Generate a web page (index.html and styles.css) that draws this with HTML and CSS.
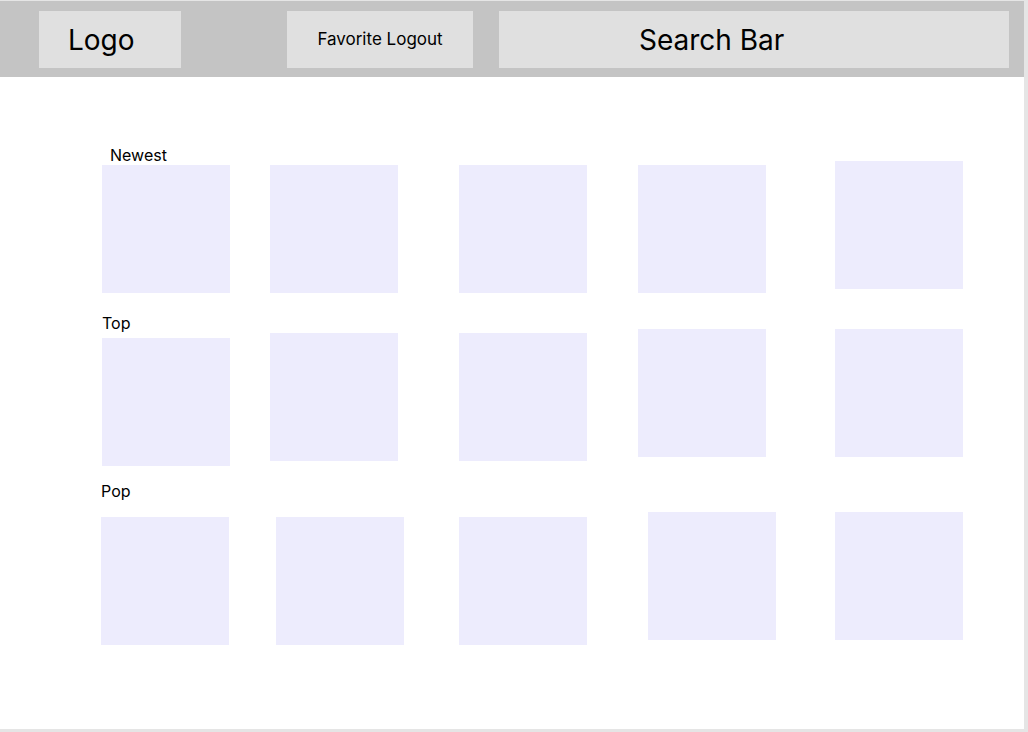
FILE: index.html
```html
<!DOCTYPE html>
<html lang="en">
<head>
  <meta charset="UTF-8">
  <meta name="viewport" content="width=device-width, initial-scale=1.0">
  <title>Home</title>
  <link rel="stylesheet" href="styles.css">
</head>
<body>

<div class="frame">

  <div class="topbar">
    <div class="box logo">Logo</div>
    <div class="box links">Favorite Logout</div>
    <div class="box search">Search Bar</div>
  </div>

  <div class="content">

    <div class="section newest">
      <div class="label">Newest</div>
      <div class="row">
        <div class="card down4"></div>
        <div class="card gap40 down4"></div>
        <div class="card gap61 down4"></div>
        <div class="card gap51 down4"></div>
        <div class="card gap69"></div>
      </div>
    </div>

    <div class="section top">
      <div class="label">Top</div>
      <div class="row">
        <div class="card down9"></div>
        <div class="card gap40 down4"></div>
        <div class="card gap61 down4"></div>
        <div class="card gap51"></div>
        <div class="card gap69"></div>
      </div>
    </div>

    <div class="section pop">
      <div class="label">Pop</div>
      <div class="row">
        <div class="card down5"></div>
        <div class="card gap47 down5"></div>
        <div class="card gap55 down5"></div>
        <div class="card gap61"></div>
        <div class="card gap59"></div>
      </div>
    </div>

  </div>

</div>

</body>
</html>
```

FILE: styles.css
```css
body {
  margin: 0;
  padding: 0;
  font-family: Inter, "Noto Sans", sans-serif;
  color: #000;
  background-color: #e5e5e5;
  overflow: hidden;
}

.frame {
  width: 1024px;
  height: 728px;
  margin-top: 1px;
  background-color: #fff;
}

/* barre du haut */
.topbar {
  height: 76px;
  background-color: #c4c4c4;
  display: flex;
  align-items: flex-start;
  padding: 10px 0 0 39px;
  box-sizing: border-box;
}

.box {
  height: 57px;
  background-color: #e0e0e0;
  display: flex;
  align-items: center;
  box-sizing: border-box;
}

.logo {
  width: 142px;
  padding: 0 0 0 29px;
  font-size: 28px;
}

.links {
  width: 186px;
  margin-left: 106px;
  padding-bottom: 1px;
  justify-content: center;
  font-size: 17px;
}

.search {
  width: 510px;
  margin-left: 26px;
  padding: 0 0 0 140px;
  font-size: 28px;
}

/* contenu */
.content {
  padding: 72px 0 0 102px;
}

.label {
  font-size: 16px;
  line-height: 12px;
}

.newest .label {
  margin-left: 8px;
}

.top {
  margin-top: 24px;
}

.pop {
  margin-top: 19px;
  margin-left: -1px;
}

.pop .label {
  margin-bottom: 15px;
}

.row {
  display: flex;
  align-items: flex-start;
}

.card {
  width: 128px;
  height: 128px;
  background-color: #edecfd;
}

.gap40 { margin-left: 40px; }
.gap47 { margin-left: 47px; }
.gap51 { margin-left: 51px; }
.gap55 { margin-left: 55px; }
.gap59 { margin-left: 59px; }
.gap61 { margin-left: 61px; }
.gap69 { margin-left: 69px; }

.down4 { margin-top: 4px; }
.down5 { margin-top: 5px; }
.down9 { margin-top: 9px; }
```
